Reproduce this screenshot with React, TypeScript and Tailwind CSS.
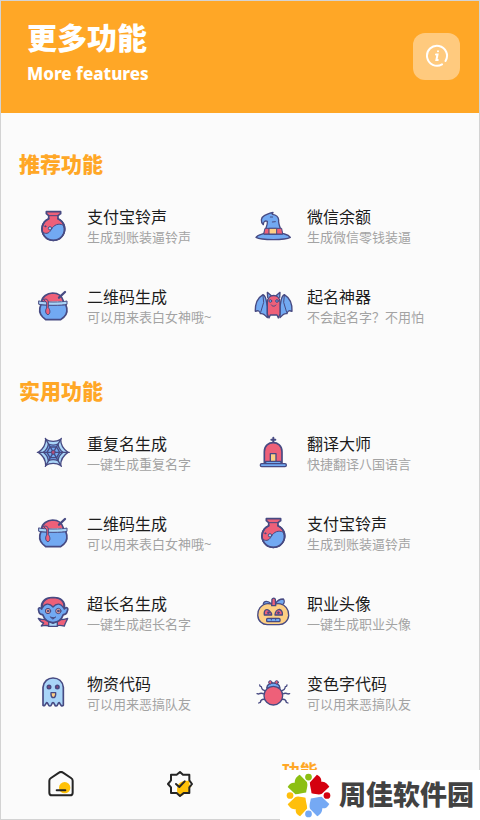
import type { ReactNode } from "react";

const Icon = ({ children }: { children: ReactNode }) => (
  <svg
    viewBox="0 0 108 108"
    className="h-9 w-9 shrink-0 overflow-visible"
    fill="none"
    stroke="#474a82"
    strokeWidth="5"
    strokeLinecap="round"
    strokeLinejoin="round"
    aria-hidden="true"
  >
    {children}
  </svg>
);

const Potion = () => (
  <Icon>
    <path d="M34 8h43v6l-8 6v9a34 34 0 1 1-28 0v-9l-7-6z" fill="#ee6079" />
    <path d="M22 70c16 8 22 0 27-9 7-13 22-20 36-12 9 23-5 45-29 45-17 0-30-9-34-24z" fill="#72a9f2" strokeWidth="3" />
    <path d="M41 20h28" strokeWidth="3" />
    <path d="M41 29a34 34 0 1 0 28 0" />
    <circle cx="45" cy="58" r="5" fill="#a9d5f8" strokeWidth="3" />
    <circle cx="31" cy="52" r="2" fill="#474a82" strokeWidth="2" />
  </Icon>
);

const Hat = () => (
  <Icon>
    <path d="M3 85c6-9 18-9 25-12h54c8 3 18 3 24 12-16 9-87 9-103 0z" fill="#72a9f2" strokeWidth="4" />
    <path d="M28 75c3-17 11-28 9-38-8-3-12 2-12 10-9-8-8-22 4-28 7-3 15-8 25-9l-2 6c9 1 18 7 19 17-2 12 7 28 11 42z" fill="#72a9f2" strokeWidth="4" />
    <path d="M31 58h49l3 17H27z" fill="#ee6079" strokeWidth="3" />
    <path d="M43 58h22v17H43z" fill="#fdcf84" strokeWidth="3" />
    <path d="M46 24h7M52 39l9-1" strokeWidth="3" />
  </Icon>
);

const Cauldron = () => (
  <Icon>
    <path d="M20 38C21 22 37 13 53 12c16 0 28 10 32 24" fill="#ee6079" />
    <path d="M72 26l18-17" strokeWidth="7" />
    <path d="M18 46c-6 14-5 28 5 38l9 8h45l10-8c11-11 11-24 5-38z" fill="#72a9f2" />
    <path d="M12 36c12 4 72 4 84 0v10c-12 4-72 4-84 0z" fill="#a9d5f8" strokeWidth="3" />
    <path d="M26 31c7-3 14 1 14 8v17c6 6 7 19-1 21-8-1-9-14-4-20V42z" fill="#ee6079" strokeWidth="3" />
  </Icon>
);

const Bat = () => (
  <Icon>
    <path d="M37 52c-4-17-2-29-13-35C9 26 0 43 1 67c9-4 13-1 15 7 8-2 13 2 21 12zM75 52c4-17 2-29 13-35 15 9 24 26 23 50-9-4-13-1-15 7-8-2-13 2-21 12z" fill="#72a9f2" strokeWidth="4" />
    <path d="M24 20l2 20-9 30M88 20l-2 20 9 30" strokeWidth="3" />
    <path d="M38 25l-1-15 12 10M74 25l1-15-12 10" fill="#72a9f2" strokeWidth="4" />
    <path d="M37 75V39c0-26 38-26 38 0v36l-5 12-4-9H46l-4 9z" fill="#ee6079" strokeWidth="4" />
    <path d="M49 48c3 5 11 5 14 0" strokeWidth="3" />
    <circle cx="46" cy="36" r="4" fill="#72a9f2" strokeWidth="3" />
    <circle cx="66" cy="36" r="4" fill="#72a9f2" strokeWidth="3" />
  </Icon>
);

const Web = () => (
  <Icon>
    <path d="M32 10c13 8 32 8 45 0 0 16 8 30 22 39-14 9-22 24-22 39-13-8-32-8-45 0 0-16-8-30-22-39 14-9 22-23 22-39z" fill="#a9d5f8" strokeWidth="4" />
    <path d="M40 24c9 4 20 4 29 0 1 10 7 19 15 25-8 6-14 15-15 25-9-4-20-4-29 0-1-10-7-19-15-25 8-6 14-15 15-25z" fill="#72a9f2" strokeWidth="4" />
    <path d="M45 33h20l9 16-9 16H45l-9-16z" strokeWidth="4" />
    <path d="M7 49h96M31 7l48 84M79 7L31 91" strokeWidth="4" />
    <circle cx="55" cy="49" r="6" fill="#b34e78" strokeWidth="3" />
  </Icon>
);

const Tomb = () => (
  <Icon>
    <path d="M55 5v15M49 11h12" strokeWidth="6" />
    <path d="M28 80V47c0-36 53-36 53 0v33z" fill="#ee6079" />
    <path d="M46 79V53h17v26z" fill="#fdcf84" strokeWidth="4" />
    <path d="M32 76h46v7H32z" fill="#72a9f2" strokeWidth="4" />
    <rect x="16" y="83" width="78" height="9" rx="4" fill="#72a9f2" strokeWidth="4" />
  </Icon>
);

const Vampire = () => (
  <Icon>
    <path d="M10 67c8 3 16 4 22 4h44c6 0 14-1 22-4-3 9-8 15-10 23-13-3-20-3-25 1H44c-8-5-15-2-25-1l7-9c-8-2-12-7-16-14z" fill="#ee6079" strokeWidth="4" />
    <path d="M20 39C16 18 30 4 54 5c25-1 38 13 34 34 7-8 13-3 9 6-2 8-7 11-12 11-6 16-17 24-31 24S29 72 23 56c-5 0-11-4-12-12-3-8 3-12 9-5z" fill="#72a9f2" />
    <path d="M22 36C20 18 31 6 54 5c23 0 36 13 32 31-8-13-20-17-32-3-12-14-25-10-32 3z" fill="#ee6079" strokeWidth="4" />
    <circle cx="39" cy="45" r="8" fill="#f5a99c" strokeWidth="3" />
    <circle cx="70" cy="45" r="8" fill="#f5a99c" strokeWidth="3" />
    <circle cx="39" cy="45" r="3" fill="#474a82" strokeWidth="2" />
    <circle cx="70" cy="45" r="3" fill="#474a82" strokeWidth="2" />
    <path d="M47 63c5 3 10 3 15 0l-8 6z" fill="#474a82" strokeWidth="3" />
    <path d="M41 77l13 5 13-5v14H41z" fill="#a9d5f8" strokeWidth="4" />
  </Icon>
);

const Ghost = () => (
  <Icon>
    <path d="M24 88V34C26 16 39 6 54 6c16 0 29 10 31 28v54c-6 5-9-3-12-8-6 0-3 11-10 10-5 0-4-10-9-10s-3 10-9 10c-6 1-5-10-10-10-4 4-5 12-11 8z" fill="#a9d5f8" />
    <circle cx="42" cy="33" r="5" fill="#ad4775" />
    <circle cx="67" cy="33" r="5" fill="#ad4775" />
    <path d="M48 50h14v6c-1 12-13 12-14 0z" fill="#fdcf84" strokeWidth="4" />
  </Icon>
);

const Pumpkin = () => (
  <Icon>
    <path d="M50 24c-12-11-23-10-25 0l14 8h31l15-8c4-5 3-12 0-15-12 0-20 7-24 15z" fill="#72a9f2" strokeWidth="4" />
    <path d="M55 26c14-6 30-3 39 9 11 14 9 34-3 44-5 5-11 7-19 7H37c-8 0-14-2-19-7-12-10-13-31-3-44 9-12 25-15 40-9z" fill="#fdcf84" strokeWidth="4" />
    <path d="M50 29l1-19c2-5 9-5 10 0l1 19z" fill="#ee6079" strokeWidth="4" />
    <path d="M28 57c-2-15 6-20 15-13 6 5 7 9 7 13zM60 57c0-9 6-16 13-17 7 2 10 8 9 17z" fill="#ee6079" strokeWidth="4" />
    <circle cx="40" cy="50" r="3" fill="#474a82" strokeWidth="2" />
    <circle cx="70" cy="50" r="3" fill="#474a82" strokeWidth="2" />
    <rect x="35" y="67" width="40" height="10" rx="3" fill="#72a9f2" strokeWidth="4" />
    <path d="M49 67v5M62 67v5" strokeWidth="3" />
  </Icon>
);

const Bug = () => (
  <Icon>
    <path d="M30 44c-8-1-10-5-11-12-4 0-5-2-5-5M80 44c8-1 10-5 11-12 4 0 5-2 5-5M27 54c-6-3-11-3-16 0l-5-1M83 54c6-3 11-3 16 0l5-1M29 70c-8-1-12 2-13 9l-5 2M81 70c8-1 12 2 13 9l5 2" strokeWidth="4" />
    <path d="M35 36c2-11 9-15 20-15s18 4 20 15z" fill="#72a9f2" strokeWidth="4" />
    <circle cx="46" cy="19" r="5" fill="#ee6079" strokeWidth="3" />
    <circle cx="65" cy="19" r="5" fill="#ee6079" strokeWidth="3" />
    <circle cx="55" cy="59" r="28" fill="#ee6079" strokeWidth="4" />
  </Icon>
);

const sections = [
  {
    title: "推荐功能",
    items: [
      { icon: Potion, name: "支付宝铃声", desc: "生成到账装逼铃声" },
      { icon: Hat, name: "微信余额", desc: "生成微信零钱装逼" },
      { icon: Cauldron, name: "二维码生成", desc: "可以用来表白女神哦~" },
      { icon: Bat, name: "起名神器", desc: "不会起名字？不用怕" },
    ],
  },
  {
    title: "实用功能",
    items: [
      { icon: Web, name: "重复名生成", desc: "一键生成重复名字" },
      { icon: Tomb, name: "翻译大师", desc: "快捷翻译八国语言" },
      { icon: Cauldron, name: "二维码生成", desc: "可以用来表白女神哦~" },
      { icon: Potion, name: "支付宝铃声", desc: "生成到账装逼铃声" },
      { icon: Vampire, name: "超长名生成", desc: "一键生成超长名字" },
      { icon: Pumpkin, name: "职业头像", desc: "一键生成职业头像" },
      { icon: Ghost, name: "物资代码", desc: "可以用来恶搞队友" },
      { icon: Bug, name: "变色字代码", desc: "可以用来恶搞队友" },
    ],
  },
];

const petals = [
  { color: "#8cbf13", dotColor: "#8cbf13", angle: 0 },
  { color: "#d4000f", dotColor: "#d4000f", angle: 90 },
  { color: "#75a9f4", dotColor: "#75a9f4", angle: 180 },
  { color: "#ffbf0c", dotColor: "#ffbf0c", angle: 270 },
];

const SiteMark = () => (
  <div className="absolute -right-px -bottom-px flex h-[50px] w-[200px] items-center gap-2 bg-white pl-1.5">
    <svg viewBox="0 0 134 134" className="h-[45px] w-[45px] shrink-0" aria-hidden="true">
      {petals.map((petal) => (
        <g key={petal.angle} transform={`rotate(${petal.angle} 67 67)`}>
          <path d="M5 42c6-11 12-14 21-13 0-11 4-17 15-24l21 22c4 10 0 18-2 31-13 1-21 5-32 5z" fill={petal.color} />
          <circle cx="67" cy="12" r="10" fill={petal.dotColor} />
        </g>
      ))}
    </svg>
    <span className="text-[27px] leading-8 font-black whitespace-nowrap text-[#424242]">周佳软件园</span>
  </div>
);

const App = () => {
  return (
    <div className="relative flex min-h-screen flex-col border border-[#d3d3d3] bg-[#fbfbfb] font-['Noto_Sans','Noto_Sans_CJK_SC',sans-serif]">
      <header className="flex h-28 items-center justify-between bg-[#ffa726] pr-[19px] pl-[26px] text-white">
        <div className="pb-1.5">
          <h1 className="text-[30px] leading-10 font-black">更多功能</h1>
          <p className="text-[17px] leading-8 font-extrabold">More features</p>
        </div>
        <button
          type="button"
          aria-label="关于"
          className="mb-0.5 flex h-[47px] w-[47px] items-center justify-center rounded-xl bg-[#ffca7e]"
        >
          <svg viewBox="0 0 24 24" className="h-6 w-6" fill="none" stroke="white" strokeWidth="2" strokeLinecap="round" aria-hidden="true">
            <path d="M17 20.4A10 10 0 1 1 20.5 17" />
            <path d="M11 10.5h1.5L11.4 16h1.4M13 7.2v.1" />
          </svg>
        </button>
      </header>

      <main className="flex flex-col gap-[49px] pt-9 pr-5 pl-[18px]">
        {sections.map((section) => (
          <section key={section.title}>
            <h2 className="mb-7 text-[21px] leading-[30px] font-black text-[#ffa726]">{section.title}</h2>
            <div className="grid grid-cols-2 gap-y-10">
              {section.items.map(({ icon: ItemIcon, name, desc }) => (
                <button key={name} type="button" className="flex h-10 items-center gap-4 pl-4 text-left">
                  <ItemIcon />
                  <span className="flex flex-col whitespace-nowrap">
                    <span className="text-base leading-5 text-[#1c1c1c]">{name}</span>
                    <span className="text-[13px] leading-5 text-[#a3a3a3]">{desc}</span>
                  </span>
                </button>
              ))}
            </div>
          </section>
        ))}
      </main>

      <nav className="mt-auto grid h-[70px] grid-cols-4">
        <button type="button" aria-label="首页" className="flex items-center justify-center">
          <svg viewBox="0 0 78 78" className="h-[26px] w-[26px]" fill="none" stroke="#252525" strokeWidth="6" strokeLinecap="round" strokeLinejoin="round" aria-hidden="true">
            <circle cx="50" cy="50" r="17" fill="#ffc107" stroke="none" />
            <path d="M4 29c0-4 2-6 5-8L33 5c4-3 8-3 12 0l24 16c3 2 5 4 5 8v36c0 5-3 8-8 8H12c-5 0-8-3-8-8z" />
            <path d="M26 58h26" />
          </svg>
        </button>
        <button type="button" aria-label="认证" className="flex items-center justify-center">
          <svg viewBox="0 0 78 78" className="h-[26px] w-[26px]" fill="none" stroke="#252525" strokeWidth="6" strokeLinecap="round" strokeLinejoin="round" aria-hidden="true">
            <path d="M31 66c-4-27 9-39 37-36l-1 10 7 5-7 8v14H55l-10 7z" fill="#ffc107" stroke="none" />
            <path d="M39 3l9 8h19v17l8 11-8 10v17H50l-11 9-10-9H12V49L3 39l9-11V11h17z" />
            <path d="M27 39l10 9 16-17" />
          </svg>
        </button>
        <button type="button" aria-current="page" className="flex items-start justify-center pt-2 text-lg leading-7 font-bold text-[#ffa726]">
          功能
        </button>
      </nav>

      <SiteMark />
    </div>
  );
};

export default App;
